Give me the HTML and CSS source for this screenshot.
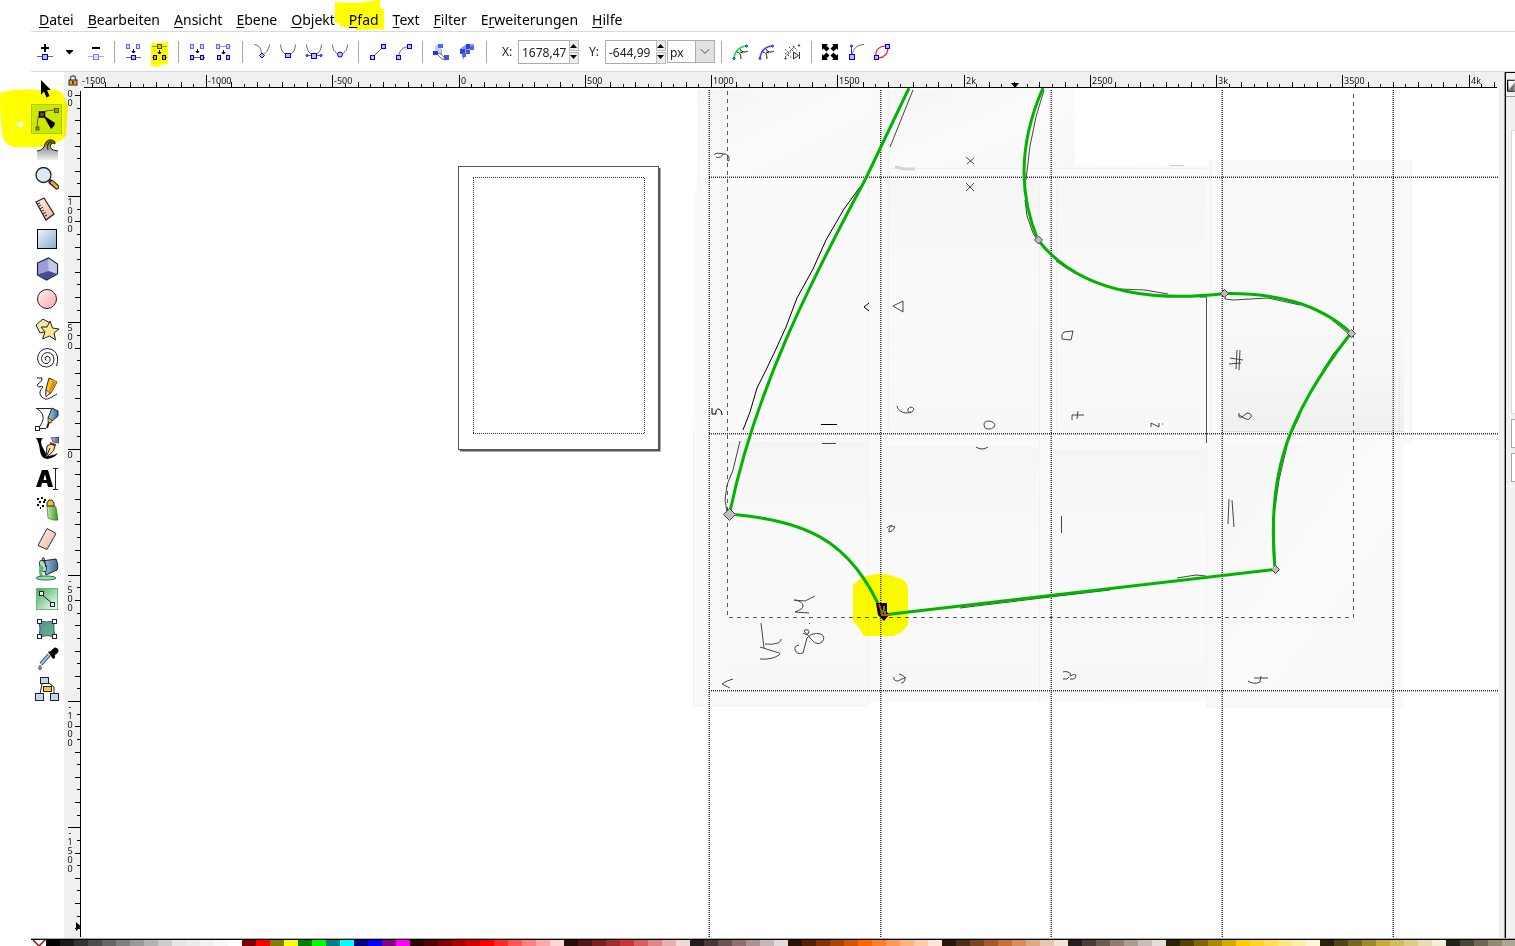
FILE: index.html
```html
<!DOCTYPE html>
<html lang="de">
<head>
<meta charset="utf-8">
<title>Inkscape</title>
<link rel="stylesheet" href="styles.css">
</head>
<body>
<svg class="defs" width="0" height="0" aria-hidden="true">
  <defs>
    <linearGradient id="gBlue" x1="0" y1="0" x2="1" y2="1"><stop offset="0" stop-color="#f2f7fb"/><stop offset="1" stop-color="#86a9cc"/></linearGradient>
    <linearGradient id="gPink" x1="0" y1="0" x2="1" y2="1"><stop offset="0" stop-color="#fff4f4"/><stop offset="1" stop-color="#ffa3ac"/></linearGradient>
    <linearGradient id="gSkin" x1="0" y1="0" x2="1" y2="1"><stop offset="0" stop-color="#fff3ee"/><stop offset="1" stop-color="#efb09a"/></linearGradient>
    <linearGradient id="gGreen" x1="0" y1="0" x2="1" y2="1"><stop offset="0" stop-color="#3fae5a"/><stop offset="1" stop-color="#ffffff"/></linearGradient>
    <linearGradient id="gGray" x1="0" y1="0" x2="0" y2="1"><stop offset="0" stop-color="#666"/><stop offset="1" stop-color="#eee"/></linearGradient>
    <linearGradient id="gMesh" x1="0" y1="0" x2="1" y2="1"><stop offset="0" stop-color="#5b8fae"/><stop offset="1" stop-color="#63bd6a"/></linearGradient>
    <linearGradient id="gCan" x1="0" y1="0" x2="1" y2="0"><stop offset="0" stop-color="#c9ecb0"/><stop offset="1" stop-color="#3a9a12"/></linearGradient>
    <linearGradient id="gSteel" x1="0" y1="0" x2="1" y2="0"><stop offset="0" stop-color="#a9cce4"/><stop offset="1" stop-color="#3a6a94"/></linearGradient>
    <linearGradient id="sheetA" x1="0" y1="0" x2="1" y2="1"><stop offset="0" stop-color="#f6f6f6"/><stop offset=".5" stop-color="#fbfbfb"/><stop offset="1" stop-color="#f8f8f8"/></linearGradient>
    <linearGradient id="sheetB" x1="0" y1="0" x2="0" y2="1"><stop offset="0" stop-color="#f5f5f5"/><stop offset=".4" stop-color="#fafafa"/><stop offset="1" stop-color="#f8f8f8"/></linearGradient>
    <linearGradient id="sheetC" x1="0" y1="0" x2="0" y2="1"><stop offset="0" stop-color="#f9f9f9"/><stop offset=".6" stop-color="#f9f9f9"/><stop offset="1" stop-color="#f0f0f0"/></linearGradient>
  </defs>
</svg>

<nav class="menubar" aria-label="Menü">
  <a href="#datei"><u>D</u>atei</a><a href="#bearbeiten"><u>B</u>earbeiten</a><a href="#ansicht"><u>A</u>nsicht</a><a href="#ebene"><u>E</u>bene</a><a href="#objekt"><u>O</u>bjekt</a><a href="#pfad"><u>P</u>fad</a><a href="#text"><u>T</u>ext</a><a href="#filter"><u>F</u>ilter</a><a href="#erweiterungen">E<u>r</u>weiterungen</a><a href="#hilfe"><u>H</u>ilfe</a>
</nav>

<div class="toolbar" role="toolbar" aria-label="Knotenwerkzeug">
  <button class="tb" aria-label="Knoten einfügen"><svg viewBox="0 0 24 24"><path class="k2" d="M12 4v8M8 8h8"/><path class="ln" d="M4 16.500h16"/><rect class="nd" x="9.500" y="14.500" width="5" height="5"/></svg></button>
  <button class="tb narrow" aria-label="Mehr"><svg viewBox="0 0 24 24"><path d="M8 10h7v1l-3.500 3.500L8 11z"/></svg></button>
  <button class="tb" aria-label="Knoten löschen"><svg viewBox="0 0 24 24"><path class="k2" d="M9 8h8"/><g opacity=".5"><path class="ln" d="M5 16.500h16"/><rect class="nd" x="10.500" y="14.500" width="5" height="5"/></g></svg></button>
  <span class="sep"></span>
  <button class="tb" aria-label="Knoten vereinen"><svg viewBox="0 0 24 24"><g opacity=".6"><rect class="nd" x="5.500" y="4.500" width="3" height="4"/><rect class="nd" x="15.500" y="4.500" width="3" height="4"/></g><path class="k1" d="M12.500 9v3M11 11.500h3L12.500 13z"/><path class="ln" d="M5 17.500h15"/><rect class="nd" x="10.500" y="15.500" width="4" height="4"/></svg></button>
  <button class="tb" aria-label="Pfad trennen"><svg viewBox="0 0 24 24"><g opacity=".7"><path class="ln" d="M5 6.500h15"/><rect class="nd" x="10.500" y="4.500" width="4" height="4"/></g><path class="k1" d="M12.500 10v2M11 12.500h3L12.500 14z"/><path class="ln" d="M5 17.500h2M18 17.500h2"/><rect class="nd" x="6.500" y="15.500" width="3" height="4"/><rect class="nd" x="15.500" y="15.500" width="3" height="4"/></svg></button>
  <span class="sep"></span>
  <button class="tb" aria-label="Endknoten verbinden"><svg viewBox="0 0 24 24"><g opacity=".6"><rect class="nd" x="5.500" y="4.500" width="3" height="4"/><rect class="nd" x="15.500" y="4.500" width="3" height="4"/></g><path class="k1" d="M12.500 9v3M11 11.500h3L12.500 13z"/><path class="ln" d="M5 17.500h15"/><rect class="nd" x="5.500" y="15.500" width="3" height="4"/><rect class="nd" x="15.500" y="15.500" width="3" height="4"/></svg></button>
  <button class="tb" aria-label="Segment löschen"><svg viewBox="0 0 24 24"><g opacity=".6"><path class="ln" d="M5 6.500h15"/><rect class="nd" x="5.500" y="4.500" width="3" height="4"/><rect class="nd" x="15.500" y="4.500" width="3" height="4"/></g><path class="k1" d="M12.500 10v2M11 12.500h3L12.500 14z"/><rect class="nd" x="6.500" y="15.500" width="3" height="4"/><rect class="nd" x="15.500" y="15.500" width="3" height="4"/></svg></button>
  <span class="sep"></span>
  <button class="tb" aria-label="Eckig"><svg viewBox="0 0 24 24"><path class="ln" d="M5 4.500C10 5 12 8 13 15C16 14 20 10 20.500 4.500"/><path class="nd" d="M13 13l2.500 2.500L13 18 10.500 15.500z"/></svg></button>
  <button class="tb" aria-label="Glatt"><svg viewBox="0 0 24 24"><path class="ln" d="M5.500 4.500C6 11 9 14.500 13 14.500S20 11 20.500 4.500"/><rect class="nd" x="10.500" y="13.500" width="5" height="4"/></svg></button>
  <button class="tb" aria-label="Symmetrisch"><svg viewBox="0 0 24 24"><path class="ln" d="M5.500 4.500C6 11 9 14.500 13 14.500S20 11 20.500 4.500M6 15.500h14"/><rect class="nd" x="10.500" y="13.500" width="5" height="5"/><circle class="nd" cx="6" cy="15.500" r="1"/><circle class="nd" cx="20" cy="15.500" r="1"/></svg></button>
  <button class="tb" aria-label="Automatisch glatt"><svg viewBox="0 0 24 24"><path class="ln" d="M5.500 4.500C6 11 9 14 13 14S20 11 20.500 4.500"/><circle class="nd" cx="13" cy="14.500" r="2.500"/></svg></button>
  <span class="sep"></span>
  <button class="tb" aria-label="Linie"><svg viewBox="0 0 24 24"><path class="ln" d="M7.500 17.500l11-11"/><rect class="nd" x="5.500" y="15.500" width="4" height="4"/><rect class="nd" x="16.500" y="4.500" width="4" height="4"/></svg></button>
  <button class="tb" aria-label="Kurve"><svg viewBox="0 0 24 24"><path class="ln" d="M7.500 17.500C8 10 12 7 18.500 6.500"/><rect class="nd" x="5.500" y="15.500" width="4" height="4"/><rect class="nd" x="16.500" y="4.500" width="4" height="4"/></svg></button>
  <span class="sep"></span>
  <button class="tb" aria-label="Objekt in Pfad"><svg viewBox="0 0 24 24"><g class="soft"><path class="ln" d="M7 14V6h6M12 9v5q1 3 6 4M7 14q4-1 5 0"/><path d="M6 6h6v7H6z" fill="#c9cff4"/><rect x="4" y="11" width="5" height="4" fill="#2a38dd"/><rect x="9" y="4" width="5" height="4" fill="#5566ee"/><path d="M9 15q3 5 8 5" class="ln"/><rect x="15" y="15" width="5" height="5" fill="#4455ee"/></g></svg></button>
  <button class="tb" aria-label="Kontur in Pfad"><svg viewBox="0 0 24 24"><g class="soft"><path d="M5 9q6-6 14-5v4q-7 1-10 6z" fill="#8b9af2"/><path class="ln" d="M8 19q2-5 5-7"/><rect x="11" y="4" width="4" height="5" fill="#2e3ddc"/><rect x="15" y="6" width="4" height="4" fill="#5566ee"/><rect x="5" y="9" width="5" height="5" fill="#3344dd"/><rect x="11" y="10" width="4" height="4" fill="#4455ee"/><rect x="7" y="13" width="4" height="4" fill="#5566ee"/></g></svg></button>
  <span class="sep"></span>
  <label class="lbl" for="x">X:</label>
  <span class="spin"><input id="x" type="text" value="1678,47"><span class="arrows"><button aria-label="X erhöhen"><svg viewBox="0 0 8 5"><path d="M0 5h7L3.500 1z"/></svg></button><button aria-label="X verringern"><svg viewBox="0 0 8 5"><path d="M0 0h7L3.500 4z"/></svg></button></span></span>
  <label class="lbl" for="y">Y:</label>
  <span class="spin"><input id="y" type="text" value="-644,99"><span class="arrows"><button aria-label="Y erhöhen"><svg viewBox="0 0 8 5"><path d="M0 5h7L3.500 1z"/></svg></button><button aria-label="Y verringern"><svg viewBox="0 0 8 5"><path d="M0 0h7L3.500 4z"/></svg></button></span></span>
  <span class="unit"><select aria-label="Einheit"><option>px</option><option>mm</option></select><svg viewBox="0 0 19 22"><path d="M5 8.500l4.500 4.500L14 8.500"/></svg></span>
  <span class="sep"></span>
  <button class="tb" aria-label="Ausschneidepfad bearbeiten"><svg viewBox="0 0 24 24"><path class="ln dk" d="M9 12q4 0 4 7M12 9q1 3 4 3t4-1M12 12l3 1"/><path d="M6 18C7 11 11 7 17.500 6" fill="none" stroke="#0d3" stroke-width="1.500"/><circle class="nd w" cx="6" cy="18.500" r="1"/><circle class="nd w" cx="18.500" cy="6" r="1"/></svg></button>
  <button class="tb" aria-label="Maskierung bearbeiten"><svg viewBox="0 0 24 24"><path class="ln dk" d="M9 12q4 0 4 7M12 9q1 3 4 3t4-1M12 12l3 1"/><path d="M6 18C7 11 11 7 17.500 6" fill="none" stroke="#44f" stroke-width="1.500"/><circle class="nd w" cx="6" cy="18.500" r="1"/><circle class="nd w" cx="18.500" cy="6" r="1"/></svg></button>
  <button class="tb" aria-label="Nächster Pfadeffekt"><svg viewBox="0 0 24 24"><path d="M5 9l4 4M5 13l7 5M9 7l4 4M13 6l4 4M5 17l9-8M8 13l7-7" fill="none" stroke="#555" stroke-dasharray="2 1"/><path d="M13.500 12v7l5-3.500zM19.500 12v7" fill="#e8e2c0" stroke="#333"/><circle class="nd w" cx="5.500" cy="18.500" r=".7"/><circle class="nd w" cx="19" cy="5.500" r=".7"/></svg></button>
  <span class="sep"></span>
  <button class="tb" aria-label="Transformationsgriffe"><svg viewBox="0 0 24 24"><path d="M4 4h6L8.500 5.500l3 3-3 3-3-3L4 10zM20 4v6l-1.500-1.500-3 3-3-3 3-3L14 4zM4 20v-6l1.500 1.500 3-3 3 3-3 3L10 20zM20 20h-6l1.500-1.500-3-3 3-3 3 3L20 14z"/></svg></button>
  <button class="tb" aria-label="Anfasser zeigen"><svg viewBox="0 0 24 24"><path class="ln" d="M8 16C9 9 12 5 20 4.500"/><path d="M7.500 15V7" stroke="#33f"/><rect class="nd" x="5.500" y="14.500" width="5" height="5"/><circle class="nd" cx="7.500" cy="6" r="1"/></svg></button>
  <button class="tb" aria-label="Umriss zeigen"><svg viewBox="0 0 24 24"><path d="M6.500 17.500C4 10 10 5 17.500 6.500C19 13 14 19 6.500 17.500" fill="none" stroke="#f22" stroke-width="1.300"/><rect class="nd" x="4.500" y="15.500" width="4" height="4"/><rect class="nd" x="15.500" y="4.500" width="4" height="4"/></svg></button>
</div>

<main class="workspace">
  <div class="toolbox" role="toolbar" aria-label="Werkzeuge">
    <button aria-label="Auswahl"><svg viewBox="0 0 24 24"><path d="M6 3l10 10h-4l2.500 6-3 1.500L9 14.500 6 18z"/></svg></button>
    <button class="active" aria-label="Knoten"><svg viewBox="0 0 24 24"><path class="ln" d="M2.500 21C2 12 3 7 8 5Q13 3 20 3"/><rect class="on" x="1" y="20" width="3" height="3"/><rect class="on" x="19.500" y="1.500" width="4" height="4"/><rect x="4.500" y="5" width="5" height="5" fill="#668" stroke="#000" stroke-width="1.500"/><path d="M8 8l12 8-1 3-3 3z"/></svg></button>
    <button aria-label="Modellieren"><svg viewBox="0 0 24 24"><path d="M2 14q7-1 8-7Q12 2 17 3q4 1 3 4-2-2-4 0-3 6 7 7v9H2z" fill="url(#gGray)"/><path class="ln dk" d="M2 14q7-1 8-7Q12 2 17 3q4 1 3 4-2-2-4 0-3 6 7 7M13 13q-2-8 4-8"/></svg></button>
    <button aria-label="Zoom"><svg viewBox="0 0 24 24"><path d="M16 15l6 5" stroke="#222" stroke-width="5" stroke-linecap="round"/><path d="M17 15.500l5 4.500" stroke="#f5a623" stroke-width="3" stroke-linecap="round"/><circle cx="8.500" cy="8" r="7.500" fill="#dce9f5" stroke="#222" stroke-width="1.300"/></svg></button>
    <button aria-label="Messen"><svg viewBox="0 0 24 24"><path d="M1 5l8-4 10 16-8 6z" fill="url(#gSkin)" stroke="#222" stroke-width="1.200"/><path class="ln dk" d="M2 7l3-1M4 9l2-1M5 12l3-2M7 14l2-1M8 17l3-2M10 19l2-1"/></svg></button>
    <button aria-label="Rechteck"><svg viewBox="0 0 24 24"><rect x="2.500" y="2.500" width="19" height="19" fill="url(#gBlue)" stroke="#000"/></svg></button>
    <button aria-label="3D-Quader"><svg viewBox="0 0 24 24"><path d="M2.500 6l11-5 9 6v10l-11 6-9-5z" fill="#9d9dd8" stroke="#222" stroke-width="1.200"/><path d="M13.500 1.500l8.500 6v9.500l-8.500-3z" fill="#c8c8ea"/><path d="M3 17.500l10.500-3.500 8.500 3-10.500 5.500z" fill="#4a4a9c"/></svg></button>
    <button aria-label="Ellipse"><svg viewBox="0 0 24 24"><circle cx="12" cy="12" r="9.500" fill="url(#gPink)" stroke="#222"/></svg></button>
    <button aria-label="Stern"><svg viewBox="0 0 24 24"><path d="M1 8l7-6 7 4-2 8-8 2z" fill="#f6ecac" stroke="#222"/><path d="M15 4l2.500 7 6.500 1-5 4 1.500 7-6-4-7 3 2.500-7-4-5h6z" fill="#ffe98f" stroke="#222"/></svg></button>
    <button aria-label="Spirale"><svg viewBox="0 0 24 24"><path class="ln dk" d="M11.500 13.500Q9 12.500 10.500 10Q13 8 15 11Q16 15 12 16.500Q7 17 6.500 11.500Q7 6 12.500 5.500Q19 6 19 13Q18 19.500 11.500 20Q3.500 19.500 2.500 12Q3 2.500 12 1.500Q21 2 22.500 10Q23 15 21.500 19"/></svg></button>
    <button aria-label="Freihand"><svg viewBox="0 0 24 24"><path class="ln dk" d="M2 1h5q1 3-4 6-2 2 1 3 3-1 4 0-5 5-2 9 4 5 9 2 3-2 7-4"/><path d="M14 1l8 4-6 11-5 3 0-7z" fill="#f8c02a" stroke="#222"/><path d="M18 2l4 3-6 11-2-1z" fill="#e88d12"/><path d="M11 13l4 3-4 4z" fill="#fff0cc" stroke="#222" stroke-width=".7"/></svg></button>
    <button aria-label="Bezier"><svg viewBox="0 0 24 24"><path class="ln dk" d="M1 1.500h15M2 1.500q9 6 5 14-2 4-4 6h8"/><path d="M17 1l6 3v5l-6 5-4-3z" fill="url(#gSteel)" stroke="#223"/><path d="M13 11l4 2-1 3-3-1z" fill="#f7c33a" stroke="#222" stroke-width=".7"/><path d="M14 15l-2 6" stroke="#222" stroke-width="2"/><rect class="on" x=".5" y="19.500" width="4" height="4" fill="#fff"/></svg></button>
    <button aria-label="Kalligrafie"><svg viewBox="0 0 24 24"><path d="M1 1h7q-4 3 0 10 3 6 5 8 5 0 10-3-3 5-11 6-6-1-7-8Q4 5 1 1z"/><path d="M16 0h8v6l-6-1z" fill="url(#gSteel)" stroke="#222" stroke-width=".6"/><path d="M15 5l6 2v2l-6-2z" fill="#c11"/><path d="M12 9l4-2 4 2q0 5-6 9l-3 2z" fill="#fce29a" stroke="#222"/><path d="M15 11l-3 7" stroke="#222"/></svg></button>
    <button aria-label="Text"><svg viewBox="0 0 24 24"><path d="M1 20L7 3h6l5 17h-5l-1-4H7l-1 4zM8.500 13h3L10 7z" fill-rule="evenodd"/><path class="ln dk" d="M18 1.500h5M18 22.500h5M20.500 2v20"/></svg></button>
    <button aria-label="Sprühdose"><svg viewBox="0 0 24 24"><path d="M12 9q5-3 9 1l2 13q-5 1-10-2z" fill="url(#gCan)" stroke="#373" stroke-width=".7"/><path d="M12 6l2-3h3l2 3v3h-7z" fill="#f1c23a" stroke="#222"/><path d="M2 2h2M6 1h2M4 5h2M8 5h2M2 8h2M7 9h2M9 3h2M5 11h1" stroke="#000" stroke-width="1.800"/></svg></button>
    <button aria-label="Radierer"><svg viewBox="0 0 24 24"><path d="M12 1.500l9 5-9 16-9-4z" fill="url(#gSkin)" stroke="#333"/></svg></button>
    <button aria-label="Farbeimer"><svg viewBox="0 0 24 24"><path d="M7 4l14-2q3 7 1 11l-11 5z" fill="url(#gSteel)" stroke="#222"/><ellipse cx="8" cy="9" rx="3" ry="6" transform="rotate(-20 8 9)" fill="#afdcc0" stroke="#222"/><path d="M5 7q-2 7 0 13l3 0q-2-7 1-9z" fill="#5cb874"/><ellipse cx="11" cy="21" rx="10" ry="2" fill="#9ddcae" stroke="#274"/><path class="ln dk" d="M8 4q-1-5 1-3l2 9"/></svg></button>
    <button aria-label="Farbverlauf"><svg viewBox="0 0 24 24"><rect x="1.500" y="1.500" width="21" height="21" fill="url(#gGreen)" stroke="#65b878"/><path class="ln dk" d="M6 7l12 10"/><rect class="on" x="4.500" y="4.500" width="4" height="4" fill="#dfd"/><rect class="on" x="15.500" y="15.500" width="4" height="4" fill="#fff"/></svg></button>
    <button aria-label="Gitter"><svg viewBox="0 0 24 24"><path d="M4 4q8 2 15 0-1 8 1 16-8-3-16 0 2-8 0-16z" fill="url(#gMesh)" stroke="#357"/><g fill="#fff"><rect class="on" x="2.500" y="2.500" width="4" height="4"/><rect class="on" x="17.500" y="2.500" width="4" height="4"/><rect class="on" x="2.500" y="17.500" width="4" height="4"/><rect class="on" x="17.500" y="17.500" width="4" height="4"/></g></svg></button>
    <button aria-label="Pipette"><svg viewBox="0 0 24 24"><path d="M14 8L6 17" stroke="#345" stroke-width="4"/><path d="M14 8L6 17" stroke="#9cc6e8" stroke-width="2"/><path d="M13 5l3-1q4-6 7-2 2 3-3 6v3l-2 1z"/><path d="M5 18q-3 4 0 5 3-1 0-5z" fill="#5b93c9" stroke="#345" stroke-width=".6"/></svg></button>
    <button aria-label="Objektverbinder"><svg viewBox="0 0 24 24"><path class="ln dk" d="M7 7L5 17M14 6l5 4v7"/><g fill="#c3d8ee"><rect class="on" x="5.500" y=".5" width="8" height="6"/><rect class="on" x=".5" y="16.500" width="8" height="7"/><rect class="on" x="15.500" y="16.500" width="8" height="7"/></g><rect class="on" x="8.500" y="9.500" width="8" height="5" fill="#ffc83a"/></svg></button>
  </div>

  <div class="editor">
    <div class="corner"><svg viewBox="0 0 10 11"><path d="M2.500 5V3q0-2 2.500-2t2.500 2v2" fill="none" stroke="#555" stroke-width="1.300"/><rect x="1" y="5" width="8" height="5" fill="#e8a33a" stroke="#321"/><path d="M5 6v3" stroke="#321" stroke-width="1.500"/></svg></div>
    <svg class="ruler-h" id="rulerH"></svg>
    <svg class="ruler-v" id="rulerV"></svg>
    <svg class="canvas" role="img" aria-label="Zeichenfläche">
      <g transform="translate(-81 -88)">
        <!-- page -->
        <path d="M460 450.500h199.500V168" fill="none" stroke="#555" stroke-width="2"/>
        <rect x="458.500" y="166.500" width="200" height="283" fill="#fff" stroke="#555"/>
        <path d="M473 177.500H645M473 433.500H645M473.500 178V433M644.500 178V433" fill="none" stroke="#333" stroke-dasharray="1 1"/>

        <!-- scanned sheets -->
        <path d="M698 88H1075V165L1207 166V160H1411V443H1404V707H1206V701L869 703V706H693V430L695 187H698z" fill="#fafafa"/>
        <rect x="698" y="90" width="170" height="87" fill="url(#sheetA)"/>
        <rect x="889" y="90" width="186" height="78" fill="url(#sheetA)"/>
        <rect x="889" y="181" width="150" height="251" fill="url(#sheetB)"/>
        <rect x="1056" y="181" width="150" height="251" fill="url(#sheetB)"/>
        <rect x="1222" y="181" width="182" height="251" fill="url(#sheetC)"/>
        <rect x="728" y="441" width="141" height="250" fill="url(#sheetB)"/>
        <rect x="885" y="447" width="153" height="240" fill="url(#sheetB)"/>
        <rect x="1053" y="449" width="153" height="240" fill="url(#sheetB)"/>
        <rect x="1222" y="444" width="178" height="246" fill="url(#sheetA)"/>
        <g fill="none" stroke="#f1f1f1">
          <path d="M868.500 177V703M888.500 90V430M1039.500 180V700M1056.500 180V430M1210.500 160V443M1411.500 160V443M698.500 90V187M693.500 430V706H869M889 168.500H1207M1206.500 443V707H1404"/>
          <path d="M1222 431.500H1404" stroke="#ddd"/>
        </g>
        <path d="M895 167l10 2h10" fill="none" stroke="#d5d5d5" stroke-width="3"/>
        <path d="M1206.500 297V443" fill="none" stroke="#555"/>
        <path d="M1170 165.500h14" stroke="#ccc"/>

        <!-- guides -->
        <g class="guide-halo"><path d="M708.500 90V937M881.500 90V937M1050.500 90V937M1221.500 90V937M1392.500 90V937M709 176.500H1499M709 434.500H1499M709 691.500H1499"/></g>
        <g class="guide"><path d="M709.500 90V937M880.500 90V937M1051.500 90V937M1222.500 90V937M1393.500 90V937M709 177.500H1499M709 433.500H1499M709 690.500H1499"/></g>
        <path d="M727.500 91V617.500H1353.500V90" fill="none" stroke="#555" stroke-dasharray="4 4"/>

        <!-- pen outline -->
        <g class="pen black">
          <path d="M860 187L844 209 826 240 813 269 797 298 786 327 776 349 766 370 757 388 750 412 743 430"/>
        </g>
        <g class="pen">
          <path d="M913 90L890 147M1044 90L1036 117 1030 146 1026 180M1025 200L1027 216 1033 233 1038 241"/>
          <path d="M740 441L733 470 727 485 725 500 727 512"/>
          <path d="M1056 261L1066 268 1080 276M1120 289L1145 290 1168 294M1200 297h6M1225 293L1225 299 1233 300 1268 298 1300 305M1332 320L1349 334"/>
          <path d="M1349 336L1334 353 1323 370M1300 415L1293 430M1287 446L1279 480 1274 515 1275 560"/>
          <path d="M1177 578L1196 575 1206 576M1110 590L1050 597 960 608M740 515L765 518 790 524"/>
        </g>

        <!-- handwriting -->
        <g class="pen hand">
          <path d="M714 155q1-3 10-1 6 0 5 7-2 0-2-2M716 157q5 2 7-3"/>
          <path d="M966 157l8 7M974 158l-7 6M966 183l8 8M974 183l-8 8"/>
          <path d="M903 301v11l-10-6z"/>
          <path d="M1064 332l9-1-2 9-9-1q-1-5 2-7z"/>
          <path d="M1237 350l-1 19M1240 350l-1 20M1230 358l13 2M1229 364l12-1"/>
          <path d="M1239 413q-1 6 3 4l5-4q5 0 4 4-2 4-5 2l-7-4"/>
          <path d="M897 406q1 6 9 7 7 0 8-4-3-4-6 0-1 4 3 3"/>
          <path d="M984 425q0-4 5-4 6 1 6 5-3 4-8 3-3-1-3-4zM976 447q6 4 12 0"/>
          <path d="M1072 420v-5h12M1078 411l-1 8"/>
          <path d="M1151 427v-4l8 4v-4M1162 424h1"/>
          <path d="M822 443.500h14"/>
          <path d="M887 528q2-4 8-1-2 5-6 5-1-4 3-7"/>
          <path d="M1061.500 516v17M1229 499l-1 25M1232 500l2 27"/>
          <path d="M815 596l-10 5-11-1q9 1 9 6 0 3-8 6l14 1"/>
          <path d="M761 623l3 25M765 644q8 1 13-1 4-2 3-4M760 647l16 5q6 1 3 3-7 5-19 4"/>
          <path d="M809 623.500h1M799 645q-5 1-4 5 2 5 8 3l4-15q5-6 14-4 5 3 1 8-5 4-10-2l-8-9q0-2 4-1 2 1 0 4-3 1-5-1"/>
          <path d="M722 684q6-4 11-5M722 684l8 4"/>
          <path d="M899 674q5 1 6 4 0 5-4 5M894 677q-1 4 4 4l8-4"/>
          <path d="M1063 672q1-1 5 0 4 1 2 4 6-3 6 0-1 4-6 3M1069 677q-1 3-6 2"/>
          <path d="M1248 681q6 4 12 1l1-6M1254 678h14"/>
        </g>
        <g class="pen black">
          <path d="M869 303l-5 4 5 4M712 408v6h4q-1-5 3-5 3 1 3 6M821 424.500h16"/>
        </g>

        <!-- outline path -->
        <path class="shape" d="M909 88L866 178C810 283 755 390 729.500 514C800 521 850 535 883 615L1275 569.500C1267 480 1283 420 1351 333C1318 303 1275 293 1225 293.500C1170 300 1085 300 1038 240C1019 195 1018 145 1043 88"/>
        <g class="knot">
          <path d="M729.500 508.500l6 6-6 6-6-6z"/>
          <path d="M1038.500 236l4 4-4 4-4-4zM1224.500 289.500l4 4-4 4-4-4zM1351.500 329.500l4 4-4 4-4-4zM1275.500 565.500l4 4-4 4-4-4z"/>
        </g>
        <path class="knot-hot" d="M735 514.500h1M1036 238l2-2M1348 333l3-3M1272 569l3-3"/>
        <path d="M876 603h11v9l2 3-5 6-6-6z"/>
        <path d="M879 604l3 9M881 615h8" stroke="#f53a1a" stroke-width="2"/>
        <path d="M884 606v4M885 611v3" stroke="#ff0"/>
        <path d="M881 614l3-4" stroke="#0c0" stroke-width="2"/>
      </g>
    </svg>
  </div>

  <aside class="dock" aria-label="Dialoge">
    <div class="dock-tab"><svg viewBox="0 0 9 14"><path d="M1.500 13V1.500H9M1 13h8" fill="none" stroke="#000" stroke-width="1.500"/><path d="M2 12L9 4v9H2z" fill="#777"/><path d="M2 2h7L3 9z" fill="#fff"/></svg></div>
    <div class="dock-page"><span class="box tall"></span><span class="box"></span><span class="box"></span></div>
  </aside>
</main>

<div class="palette" id="palette" role="toolbar" aria-label="Farbpalette">
  <button class="none" aria-label="Keine Farbe"><svg viewBox="0 0 14 14"><path d="M1 0l12 12M13 0L1 12" stroke="#8b1a1a" stroke-width="1.500"/></svg></button>
</div>

<svg class="marker" aria-hidden="true">
  <path d="M335 8V2L355 3 380 0V8L384 9V29L356 30 354 27 340 27V24L335 22z"/>
  <path d="M151 43L168 42V64L160 65 159 67 151 66z"/>
  <path fill-rule="evenodd" d="M1 92Q20 88 40 90L58 90Q64 93 65 100L68 105 66 135Q62 142 54 143L49 146Q30 148 14 147Q3 144 2 134L1 120Q0 110 0 97zM15 124L21 122 23 122V127H20z"/>
  <path d="M853 585L862 577 876 574H886L902 579Q908 583 908 590V625L902 632 893 636H864L859 628 853 621z"/>
</svg>
<script src="app.js"></script>
</body>
</html>
```
FILE: styles.css
```css
* { box-sizing: border-box; }
html, body { height: 100%; }
body {
  margin: 0;
  padding-left: 31px;
  display: flex;
  flex-direction: column;
  overflow: hidden;
  position: relative;
  background: #fff;
  color: #000;
  font-family: "Noto Sans", "Open Sans", sans-serif;
  font-size: 12px;
}
button { border: 0; padding: 0; margin: 0; background: none; font: inherit; }
.defs { position: absolute; }

.menubar {
  flex: none;
  display: flex;
  align-items: center;
  gap: 14px;
  height: 32px;
  padding: 8px 0 0 8px;
  border-bottom: 1px solid #dadada;
  font-size: 14px;
  line-height: 20px;
}
.menubar a { color: #000; text-decoration: none; }
.menubar u { text-underline-offset: 2px; }

.toolbar {
  flex: none;
  display: flex;
  align-items: center;
  height: 40px;
  padding-left: 1px;
  border-bottom: 1px solid #dadada;
}
.tb { flex: none; width: 26px; height: 32px; padding-top: 1px; display: flex; align-items: center; justify-content: center; }
.tb.narrow { width: 24px; }
.tb svg, .toolbox svg { width: 24px; height: 24px; display: block; flex: none; }
.sep { flex: none; width: 12px; height: 22px; display: flex; justify-content: center; }
.sep::before { content: ""; width: 1px; background: #a9a9a9; }
.lbl { width: 26px; padding-left: 10px; color: #222; }

.ln { fill: none; stroke: #666; }
.dk { stroke: #222; }
.k1 { fill: #000; stroke: #000; }
.k2 { fill: none; stroke: #000; stroke-width: 2; }
.nd { fill: #bcbcff; stroke: #0000e6; }
.nd.w { fill: #fff; }
.on { stroke: #222; }
.active .on { fill: #99a; stroke: #555; }
.soft { filter: blur(0.4px); }

.spin { flex: none; display: flex; width: 61px; height: 24px; }
.spin input {
  width: 51px;
  height: 24px;
  padding: 1px 0 0 3px;
  border: 1px solid #acacac;
  border-right: 0;
  background: #fff;
  color: #222;
  font: inherit;
}
.arrows { width: 10px; display: flex; flex-direction: column; gap: 1px; }
.arrows button {
  flex: 1;
  display: flex;
  align-items: center;
  justify-content: center;
  background: #ececec;
  border: 1px solid #bbb;
}
.arrows svg { width: 8px; height: 5px; flex: none; }
.unit { flex: none; position: relative; width: 49px; height: 23px; padding-left: 1px; }
.unit select {
  appearance: none;
  width: 48px;
  height: 23px;
  padding: 1px 0 0 2px;
  border: 1px solid #acacac;
  border-radius: 0;
  background: #fff;
  color: #222;
  font: inherit;
}
.unit svg {
  position: absolute;
  top: 0;
  right: 0;
  width: 20px;
  height: 23px;
  background: #e1e1e1;
  border: 1px solid #acacac;
  pointer-events: none;
}
.unit path { fill: none; stroke: #444; stroke-width: 1; }

.workspace { flex: 1; min-height: 0; display: flex; }
.toolbox { flex: none; width: 33px; padding-top: 2px; display: flex; flex-direction: column; }
.toolbox button {
  flex: none;
  width: 31px;
  height: 30px;
  display: flex;
  align-items: center;
  justify-content: center;
}
.toolbox .active { background: #cce8ff; border: 1px solid #99d1ff; }

.editor {
  flex: 1;
  min-width: 0;
  display: grid;
  grid-template-columns: 17px 1fr;
  grid-template-rows: 16px 1fr;
  padding-right: 6px;
  background: #f0f0f0;
}
.corner { display: flex; align-items: center; justify-content: center; }
.corner svg { width: 10px; height: 11px; }
.ruler-h, .ruler-v, .canvas { display: block; width: 100%; height: 100%; min-width: 0; min-height: 0; overflow: hidden; }
.canvas { background: #fff; }
.tick { stroke: #000; fill: none; }
.ruler-text { font-size: 9px; fill: #111; }

.guide path { fill: none; stroke: #33283a; stroke-dasharray: 1 1; }
.guide-halo path { fill: none; stroke: #a79cab; stroke-dasharray: 1 1; }
.shape { fill: none; stroke: #00b400; stroke-width: 3; stroke-linejoin: round; }
.pen { fill: none; stroke: #444; stroke-width: 1; stroke-linejoin: round; }
.pen.black { stroke: #000; }
.knot { fill: #bdbdbd; stroke: #444; }
.knot-hot { fill: none; stroke: #ff4dff; }

.dock { flex: none; width: 10px; border-left: 1px solid #000; border-top: 1px solid #000; box-shadow: -1px 0 #999; background: #f0f0f0; }
.dock-tab { height: 24px; padding: 6px 0 0 0; border-bottom: 1px solid #999; }
.dock-tab svg { width: 9px; height: 13px; display: block; }
.dock-page { display: flex; flex-direction: column; gap: 5px; height: 390px; padding: 33px 0 0 5px; border-bottom: 1px solid #fff; }
.box { height: 29px; flex: none; background: #fff; border: 1px solid #aaa; border-right: 0; }
.box.tall { height: 284px; border-color: #ddd; }

.palette { flex: none; display: flex; height: 7px; padding-left: 1px; border-top: 1px solid #000; box-shadow: 0 -1px #aaa; position: relative; overflow: hidden; }
.palette button { flex: none; width: 14px; height: 6px; overflow: hidden; }
.palette .none svg { width: 14px; height: 14px; display: block; }

.marker {
  position: absolute;
  top: 0;
  left: 0;
  width: 100%;
  height: 100%;
  fill: #ff0;
  mix-blend-mode: multiply;
  pointer-events: none;
}
```
FILE: app.js
```js
const NS = "http://www.w3.org/2000/svg";
const STEP = 126.25; // pixels for 500 units

function add(parent, name, attrs, text) {
  const el = document.createElementNS(NS, name);
  for (const k in attrs) el.setAttribute(k, attrs[k]);
  if (text !== undefined) el.textContent = text;
  parent.appendChild(el);
}

function tickLength(i) {
  if (i % 10 === 0) return 12;
  return i % 2 === 0 ? 5 : 3;
}

function horizontalRuler() {
  const svg = document.getElementById("rulerH");
  const width = svg.clientWidth;
  const origin = 378;
  let d = "M3 15.5H" + (width - 2);
  for (let i = -30; origin + (i * STEP) / 10 < width; i++) {
    const x = Math.floor(origin + (i * STEP) / 10) + 0.5;
    if (x > 3) d += "M" + x + " 15V" + (15 - tickLength(i));
    if (i % 10 === 0) {
      const v = i * 50;
      const label = v >= 2000 && v % 1000 === 0 ? v / 1000 + "k" : String(v);
      add(svg, "text", { x: Math.floor(x) + 2, y: 12, class: "ruler-text" }, label);
    }
  }
  add(svg, "path", { d, class: "tick" });
  add(svg, "path", { d: "M930 11h8l-4 5z" });
}

function verticalRuler() {
  const svg = document.getElementById("rulerV");
  const height = svg.clientHeight;
  const origin = 361;
  let d = "M16.5 3V" + (height - 2);
  for (let i = -30; origin + (i * STEP) / 10 < height; i++) {
    const y = Math.floor(origin + (i * STEP) / 10) + 0.5;
    if (y > 3) d += "M16 " + y + "H" + (16 - tickLength(i));
    if (i % 10 === 0) {
      [...String(-i * 50)].forEach((c, n) => {
        const base = Math.floor(y) + 9 + n * 9;
        if (base > 8) add(svg, "text", { x: 6, y: base, "text-anchor": "middle", class: "ruler-text" }, c);
      });
    }
  }
  add(svg, "path", { d, class: "tick" });
  add(svg, "path", { d: "M12 834v9l5-4.500z" });
}

const COLORS = `000000 1a1a1a 333333 4d4d4d 666666 808080 999999 b3b3b3 cccccc e6e6e6 ececec f2f2f2 f9f9f9 ffffff
800000 ff0000 808000 ffff00 008000 00ff00 008080 00ffff 000080 0000ff 800080 ff00ff
2b0000 550000 800000 aa0000 d40000 ff0000 ff2a2a ff5555 ff8080 ffaaaa ffd5d5
280b0b 501616 782121 a02c2c c83737 d35f5f de8787 e9afaf f4d7d7
241c1c 483737 6c5353 916f6f ac9393 c8b7b7 e3dbdb
2b1100 552200 803300 aa4400 d45500 ff6600 ff7f2a ff9955 ffb380 ffccaa ffe6d5
28170b 502d16 784421 a05a2c c87137 d38d5f deaa87 e9c6af f4e3d7
241f1c 483e37 6c5d53 917c6f ac9d93 c8beb7 e3dedb
2b2200 554400 806600 aa8800 d4aa00 ffcc00 ffd42a ffdd55 ffe680 ffeeaa fff6d5
28220b 504416 786721 a0892c c8ab37 d3bc5f decd87 e9ddaf f4eed7
22221c 484537 6c6753 918a6f aca793 c8c5b7 e3e2db`.split(/\s+/);

const palette = document.getElementById("palette");
for (const c of COLORS) {
  const b = document.createElement("button");
  b.style.background = "#" + c;
  b.setAttribute("aria-label", "#" + c);
  palette.appendChild(b);
}
horizontalRuler();
verticalRuler();
```
